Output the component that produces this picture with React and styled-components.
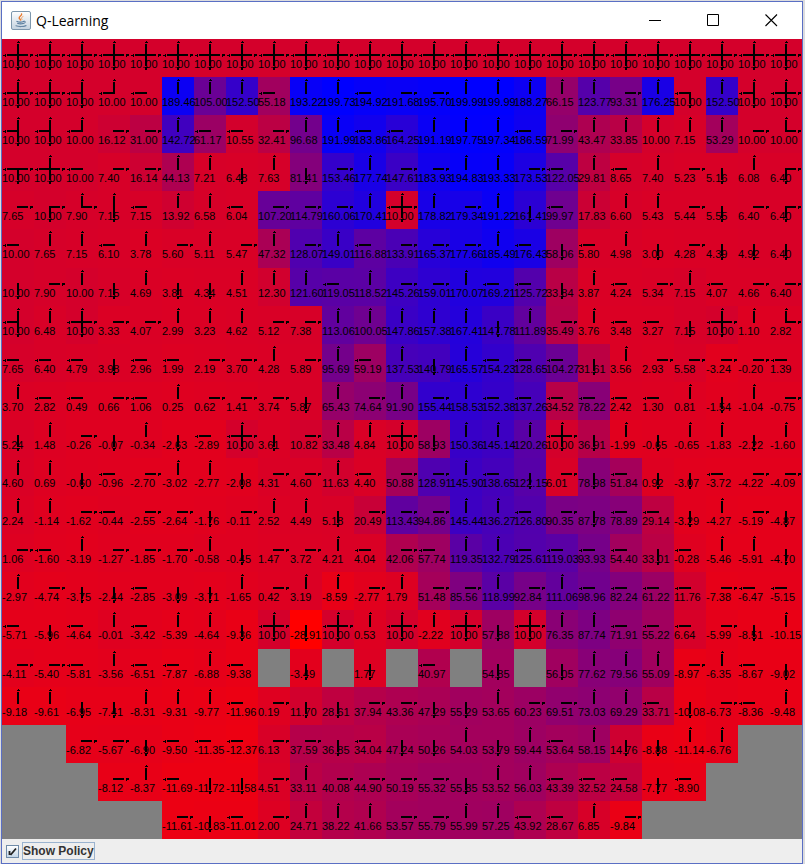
import React, { useState } from "react";
import styled, { createGlobalStyle } from "styled-components";

/* Each cell reads value/directions; "*" stands for all four, "#" is a wall. */
const ROWS = [
  "10.00/* 10.00/* 10.00/* 10.00/* 10.00/* 10.00/* 10.00/* 10.00/* 10.00/* 10.00/* 10.00/* 10.00/* 10.00/* 10.00/* 10.00/* 10.00/* 10.00/* 10.00/* 10.00/* 10.00/* 10.00/* 10.00/* 10.00/* 10.00/* 10.00/*",
  "10.00/* 10.00/* 10.00/UDL 10.00/UL 10.00/L 189.46/U 105.00/U 152.50/U 55.18/L 193.22/U 199.73/U 194.92/L 191.68/R 195.70/R 199.99/U 199.99/U 188.27/U 66.15/U 123.77/U 93.31/R 176.25/U 10.00/LD 152.50/U 10.00/UDL 10.00/*",
  "10.00/UDL 10.00/UDL 10.00/UL 16.12/R 31.00/R 142.72/U 61.17/L 10.55/L 32.41/R 96.68/U 191.99/U 183.86/L 164.25/L 191.19/U 197.75/U 197.34/U 186.59/L 71.99/R 43.47/U 33.85/U 10.00/U 7.15/U 53.29/U 10.00/R 10.00/UR",
  "10.00/LRD 10.00/* 10.00/L 7.40/R 16.14/R 44.13/U 7.21/U 6.48/D 7.63/U 81.41/D 153.46/R 177.74/U 147.61/R 183.93/R 194.83/U 193.33/U 173.53/R 122.05/L 29.81/U 8.65/L 7.40/U 5.23/R 5.16/D 6.08/U 6.40/DR",
  "7.65/R 10.00/DR 7.90/UR 7.15/UD 7.15/L 13.92/U 6.58/U 6.04/L 107.20/R 114.79/R 160.06/R 170.41/U 10.00/* 178.82/U 179.34/R 191.22/U 161.41/D 99.97/L 17.83/U 6.60/U 5.43/U 5.44/R 5.55/D 6.40/R 6.40/DR",
  "10.00/L 7.65/U 7.15/U 6.10/L 3.78/U 5.60/R 5.11/U 5.47/R 47.32/U 128.07/R 149.01/U 116.88/L 133.91/R 165.37/R 177.66/R 185.49/U 176.43/L 58.06/D 5.80/L 4.98/U 3.00/D 4.28/R 4.39/D 4.92/D 6.40/D",
  "10.00/D 7.90/R 10.00/U 7.15/D 4.69/U 3.81/D 4.34/D 4.51/U 12.30/U 121.60/U 119.05/L 118.52/U 145.26/R 159.01/R 170.07/U 169.21/L 125.72/L 33.84/D 3.87/U 4.24/L 5.34/R 7.15/U 4.07/L 4.66/R 6.40/R",
  "10.00/UDL 6.48/U 10.00/* 3.33/R 4.07/R 2.99/U 3.23/U 4.62/U 5.12/R 7.38/R 113.06/U 100.05/U 147.86/U 157.38/U 167.41/U 147.78/D 111.89/U 35.49/R 3.76/U 3.48/L 3.27/L 7.15/D 10.00/* 1.10/U 2.82/UR",
  "7.65/L 6.40/L 4.79/L 3.98/D 2.96/L 1.99/L 2.19/R 3.70/R 4.28/U 5.89/R 95.69/U 59.19/L 137.53/U 140.79/D 165.57/U 154.23/L 128.65/L 104.27/L 31.61/D 3.56/U 2.93/R 5.58/R -3.24/R -0.20/R 1.39/L",
  "3.70/U 2.82/L 0.49/L 0.66/R 1.06/L 0.25/U 0.62/R 1.41/R 3.74/R 5.87/D 65.43/U 74.64/R 91.90/U 155.44/R 158.53/U 152.38/L 137.26/L 34.52/L 78.22/L 2.42/L 1.30/L 0.81/U -1.54/D -1.04/U -0.75/R",
  "5.24/D 1.48/U -0.26/R -0.07/D -0.34/U -2.63/D -2.89/L 10.00/* 3.61/D 10.82/R 33.48/U 4.84/U 10.00/* 58.93/D 150.36/U 145.14/U 120.26/U 10.00/* 36.91/D -1.99/U -0.65/D -0.65/U -1.83/U -2.22/D -1.60/U",
  "4.60/U 0.69/U -0.60/D -0.96/L -2.70/R -3.02/U -2.77/U -2.08/D 4.31/R 4.60/R 11.63/U 4.40/L 50.88/R 128.91/R 145.90/U 138.65/L 122.15/D 6.01/R 78.98/D 51.84/L 0.92/D -3.07/D -3.72/L -4.22/R -4.09/R",
  "2.24/U -1.14/U -1.62/R -0.44/L -2.55/R -2.64/R -1.76/D -0.11/R 2.52/U 4.49/U 5.18/D 20.49/R 113.43/R 94.86/R 145.44/U 136.27/U 126.80/L 90.35/R 87.78/D 78.89/L 29.14/L -3.29/D -4.27/U -5.19/R -4.87/D",
  "1.06/R -1.60/L -3.19/U -1.27/R -1.85/R -1.70/R -0.58/U -0.45/D 1.47/R 3.72/R 4.21/U 4.04/L 42.06/R 57.74/L 119.35/U 132.79/U 125.61/L 119.03/L 93.93/L 54.40/L 33.01/D -0.28/L -5.46/U -5.91/U -4.70/D",
  "-2.97/U -4.74/R -3.75/D -2.44/D -2.85/L -3.09/D -3.71/D -1.65/U 0.42/R 3.19/U -8.59/U -2.77/R 1.79/U 51.48/R 85.56/R 118.99/U 92.84/R 111.06/U 98.96/L 82.24/L 61.22/L 11.76/L -7.38/R -6.47/L -5.15/L",
  "-5.71/L -5.96/D -4.64/L -0.01/U -3.42/L -5.39/U -4.64/U -9.36/D 10.00/* -28.91/D 10.00/* 0.53/U 10.00/* -2.22/U 10.00/* 57.88/D 10.00/* 76.35/U 87.74/U 71.91/L 55.22/L 6.64/L -5.99/R -8.51/D -10.15/U",
  "-4.11/R -5.40/R -5.81/L -3.56/U -6.51/L -7.87/L -6.88/U -9.38/L # -3.49/D # 1.77/D # 40.97/L # 54.85/D # 56.05/D 77.62/U 79.56/U 55.09/U -8.97/R -6.35/U -8.67/L -9.02/D",
  "-9.18/U -9.61/U -6.95/D -7.41/D -8.31/U -9.31/U -9.77/U -11.96/L 0.19/R 11.70/D 28.61/D 37.94/R 43.36/R 47.29/D 55.29/D 53.65/U 60.23/R 69.51/R 73.03/U 69.29/U 33.71/L -10.08/D -6.73/R -8.36/L -9.48/U",
  "# # -6.82/R -5.67/R -6.90/D -9.50/L -11.35/L -12.37/L 6.13/R 37.59/R 36.85/D 34.04/L 47.24/D 50.26/D 54.03/U 53.79/D 59.44/U 53.64/L 58.15/U 14.76/D -8.88/D -11.14/U -6.76/U # #",
  "# # # -8.12/R -8.37/U -11.69/L -11.72/D -11.58/D 4.51/R 33.11/U 40.08/R 44.90/R 50.19/R 55.32/R 55.85/D 53.52/U 56.03/U 43.39/L 32.52/L 24.58/L -7.77/D -8.90/L # # #",
  "# # # # # -11.61/R -10.83/D -11.01/L 2.00/R 24.71/U 38.22/U 41.66/U 53.57/R 55.79/R 55.99/U 57.25/U 43.92/L 28.67/L 6.85/U -9.84/R # # # # #",
].map((row) =>
  row.split(" ").map((cell) => {
    if (cell === "#") return null;
    const [value, dirs] = cell.split("/");
    return { value, dirs: dirs === "*" ? "UDLR" : dirs };
  })
);

const MIN = -28.91;
const MAX = 199.99;

/* Red for the lowest value, blue for the highest. */
function heat(value) {
  const blue = Math.round((255 * (Number(value) - MIN)) / (MAX - MIN));
  return `rgb(${255 - blue}, 0, ${blue})`;
}

const ARROWS = {
  U: "M15 5h2v12h-2zM16 2h1v1h1v1h-3v-1h1z",
  L: "M5 15h12v2h-12zM1 16h2v-1h1v3h-1v-1h-2z",
  R: "M15 15h11v2h-11zM28 15h3v2h-2v1h-1z",
  D: "M15 15h2v12h-2zM15 28h3v1h-1v2h-2z",
};

const GlobalStyle = createGlobalStyle`
  * { box-sizing: border-box; }
  body { margin: 0; background: #dcdcde; }
`;

const Desktop = styled.div`
  display: flex;
  min-height: 100vh;
  padding: 1px 2px 0 1px;
`;

const Window = styled.main`
  display: flex;
  flex: 1;
  flex-direction: column;
  min-width: 0;
  border: 1px solid #5a6fc4;
  background: #eeeeee;
`;

const TitleBar = styled.header`
  display: flex;
  align-items: center;
  height: 37px;
  padding: 0 2px 0 9px;
  background: #ffffff;
`;

const Title = styled.h1`
  flex: 1;
  margin: 0 0 0 5px;
  font: 400 14px/20px "Open Sans", "Noto Sans", sans-serif;
  color: #000000;
`;

const WindowButton = styled.button`
  display: grid;
  place-items: center;
  width: 58px;
  height: 37px;
  padding: 0;
  border: 0;
  background: transparent;
`;

const World = styled.section`
  display: grid;
  flex: 1;
  grid-template-columns: repeat(25, minmax(0, 1fr));
  grid-auto-rows: minmax(38px, 1fr);
`;

const Cell = styled.div`
  display: grid;
  grid-template-columns: minmax(0, 1fr);
  align-items: start;
  background: ${(p) => p.$fill};
`;

/* Raised above the next cell's fill, which a six-character value runs into. */
const Value = styled.span`
  position: relative;
  z-index: 1;
  grid-area: 1 / 1;
  justify-self: start;
  margin-top: 19px;
  font: 400 11px/12px "Liberation Sans", Arial, sans-serif;
  color: #000000;
  white-space: nowrap;
`;

const Arrows = styled.svg`
  grid-area: 1 / 1;
  justify-self: center;
`;

const Footer = styled.footer`
  display: flex;
  align-items: center;
  height: 24px;
  padding-left: 4px;
`;

const PolicyLabel = styled.label`
  display: flex;
  align-items: center;
  gap: 3px;
`;

const CheckHolder = styled.span`
  display: grid;
  place-items: center;
`;

const CheckInput = styled.input`
  grid-area: 1 / 1;
  appearance: none;
  width: 13px;
  height: 13px;
  margin: 0;
  border: 1px solid #6f8ba8;
  background: linear-gradient(#ffffff, #c4d7e8);
  outline: none;
`;

const CheckMark = styled.svg`
  grid-area: 1 / 1;
  pointer-events: none;
`;

const LabelText = styled.span`
  border: 1px solid #9ab3cf;
  font: 700 12px/16px "Liberation Sans", Arial, sans-serif;
  color: #333333;
`;

function JavaIcon() {
  return (
    <svg width="20" height="20" viewBox="0 0 20 20" aria-hidden="true">
      <defs>
        <linearGradient id="plate" x1="0" y1="0" x2="0" y2="1">
          <stop offset="0" stopColor="#ffffff" />
          <stop offset="1" stopColor="#c3d2df" />
        </linearGradient>
      </defs>
      <rect x="0.5" y="0.5" width="19" height="18" rx="1.5" fill="url(#plate)" stroke="#7d97ad" />
      <g fill="none" strokeLinecap="round">
        <path d="M10.6 3c.6 1.600-2.800 2.300-2.400 4 .2.900 1.200 1.200 1.200 2" stroke="#e8782c" strokeWidth="1.400" />
        <path d="M12 5.600c-1.500.7-2 1.400-1.200 2.300.3.400.2.800-.2 1.200" stroke="#f0a060" />
        <path d="M6 10.500c1.500.6 5 .6 6.800 0M6.800 12.500c1.500.5 4 .5 5.500 0" stroke="#54799b" strokeWidth="1.300" />
        <path d="M13 10.200c2-.4 2 1.500.2 2" stroke="#54799b" />
        <path d="M5 14.800c2.500 1 7.500 1 10-.2" stroke="#6787a5" strokeWidth="1.200" />
      </g>
    </svg>
  );
}

export default function App() {
  const [showPolicy, setShowPolicy] = useState(true);
  return (
    <>
      <GlobalStyle />
      <Desktop>
        <Window>
          <TitleBar>
            <JavaIcon />
            <Title>Q-Learning</Title>
            <WindowButton type="button" aria-label="Minimize">
              <svg width="13" height="13" aria-hidden="true">
                <path d="M0 6h12v1H0z" />
              </svg>
            </WindowButton>
            <WindowButton type="button" aria-label="Maximize">
              <svg width="13" height="13" aria-hidden="true">
                <path d="M.5.5h11v11H.5z" fill="none" stroke="#000" />
              </svg>
            </WindowButton>
            <WindowButton type="button" aria-label="Close">
              <svg width="13" height="13" aria-hidden="true">
                <path d="M.5.5l11.500 11.500M12 .5L.5 12" stroke="#000" strokeWidth="1.100" />
              </svg>
            </WindowButton>
          </TitleBar>
          <World aria-label="State values">
            {ROWS.map((row, r) =>
              row.map((cell, c) =>
                cell ? (
                  <Cell key={`${r}-${c}`} $fill={heat(cell.value)}>
                    <Value>{cell.value}</Value>
                    {showPolicy && (
                      <Arrows width="32" height="32" aria-hidden="true" shapeRendering="crispEdges">
                        {[...cell.dirs].map((d) => (
                          <path key={d} d={ARROWS[d]} />
                        ))}
                      </Arrows>
                    )}
                  </Cell>
                ) : (
                  <Cell key={`${r}-${c}`} $fill="#808080" />
                )
              )
            )}
          </World>
          <Footer>
            <PolicyLabel>
              <CheckHolder>
                <CheckInput
                  type="checkbox"
                  checked={showPolicy}
                  onChange={(e) => setShowPolicy(e.target.checked)}
                />
                {showPolicy && (
                  <CheckMark width="9" height="9" aria-hidden="true">
                    <path d="M1.500 4v4M2.500 8L8 1.500" fill="none" stroke="#222" strokeWidth="1.800" />
                  </CheckMark>
                )}
              </CheckHolder>
              <LabelText>Show Policy</LabelText>
            </PolicyLabel>
          </Footer>
        </Window>
      </Desktop>
    </>
  );
}
